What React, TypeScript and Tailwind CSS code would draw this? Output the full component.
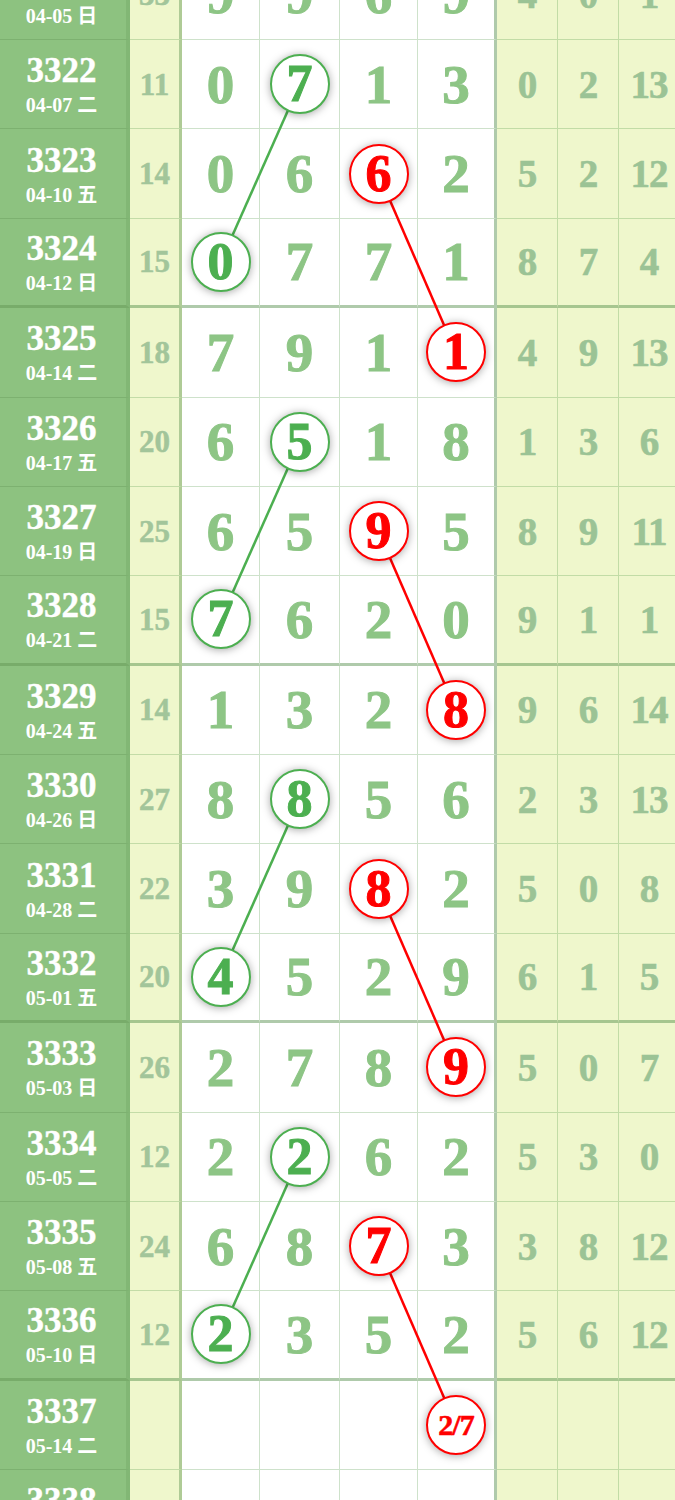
import React from 'react';

type Row = {
  no: string;
  date: string;
  sum: string;
  d: string[];
  r: string[];
  g?: number;
  red?: number;
};

const rows: Row[] = [
  { no: '3321', date: '04-05 日', sum: '33', d: ['9', '9', '6', '9'], r: ['4', '0', '1'] },
  { no: '3322', date: '04-07 二', sum: '11', d: ['0', '7', '1', '3'], g: 1, r: ['0', '2', '13'] },
  { no: '3323', date: '04-10 五', sum: '14', d: ['0', '6', '6', '2'], red: 2, r: ['5', '2', '12'] },
  { no: '3324', date: '04-12 日', sum: '15', d: ['0', '7', '7', '1'], g: 0, r: ['8', '7', '4'] },
  { no: '3325', date: '04-14 二', sum: '18', d: ['7', '9', '1', '1'], red: 3, r: ['4', '9', '13'] },
  { no: '3326', date: '04-17 五', sum: '20', d: ['6', '5', '1', '8'], g: 1, r: ['1', '3', '6'] },
  { no: '3327', date: '04-19 日', sum: '25', d: ['6', '5', '9', '5'], red: 2, r: ['8', '9', '11'] },
  { no: '3328', date: '04-21 二', sum: '15', d: ['7', '6', '2', '0'], g: 0, r: ['9', '1', '1'] },
  { no: '3329', date: '04-24 五', sum: '14', d: ['1', '3', '2', '8'], red: 3, r: ['9', '6', '14'] },
  { no: '3330', date: '04-26 日', sum: '27', d: ['8', '8', '5', '6'], g: 1, r: ['2', '3', '13'] },
  { no: '3331', date: '04-28 二', sum: '22', d: ['3', '9', '8', '2'], red: 2, r: ['5', '0', '8'] },
  { no: '3332', date: '05-01 五', sum: '20', d: ['4', '5', '2', '9'], g: 0, r: ['6', '1', '5'] },
  { no: '3333', date: '05-03 日', sum: '26', d: ['2', '7', '8', '9'], red: 3, r: ['5', '0', '7'] },
  { no: '3334', date: '05-05 二', sum: '12', d: ['2', '2', '6', '2'], g: 1, r: ['5', '3', '0'] },
  { no: '3335', date: '05-08 五', sum: '24', d: ['6', '8', '7', '3'], red: 2, r: ['3', '8', '12'] },
  { no: '3336', date: '05-10 日', sum: '12', d: ['2', '3', '5', '2'], g: 0, r: ['5', '6', '12'] },
  { no: '3337', date: '05-14 二', sum: '', d: ['', '', '', '2/7'], red: 3, r: ['', '', ''] },
  { no: '3338', date: '05-17 五', sum: '', d: ['', '', '', ''], r: ['', '', ''] },
];

const H = 89.375;
const serif = "font-['Liberation_Serif','Noto_Sans_CJK_SC',serif]";

// x centers of the four digit columns
const colX = [220.5, 299.5, 378.5, 456];
const isThick = (i: number) => i % 4 === 0 && i > 0;
const rowY = (i: number) => i * H + (H - (isThick(i + 1) ? 3 : 1)) / 2;

const links: { color: string; from: [number, number]; to: [number, number] }[] = [];
[1, 5, 9, 13].forEach((i) => links.push({ color: '#4caf50', from: [i, 1], to: [i + 2, 0] }));
[2, 6, 10, 14].forEach((i) => links.push({ color: '#ff0000', from: [i, 2], to: [i + 2, 3] }));

const Circle: React.FC<{ text: string; red?: boolean }> = ({ text, red }) => (
  <div
    className={`relative z-10 flex h-[60px] w-[60px] items-center justify-center rounded-full border-[2.5px] bg-white shadow-[0_1px_8px_rgba(0,0,0,0.35)] ${
      red ? 'border-[#ff0000] text-[#ff0000]' : 'border-[#4caf50] text-[#4caf50]'
    } ${text.length > 1 ? 'text-[30px] tracking-[-1px] [-webkit-text-stroke:0.6px_currentColor]' : 'text-[52px] [-webkit-text-stroke:1px_currentColor]'} font-bold leading-none`}
  >
    {text}
  </div>
);

export default function App() {
  return (
    <div className={`h-[1500px] w-[675px] overflow-hidden bg-white ${serif}`}>
      <div className="relative -mt-[49.375px]">
        {rows.map((row, i) => {
          const bb = isThick(i + 1) ? 'border-b-[3px] border-b-[rgba(80,140,70,0.45)]' : 'border-b border-b-[rgba(80,150,70,0.28)]';
          return (
            <div key={row.no} className="flex h-[89.375px] w-[680px]">
              <div
                className={`flex w-[130px] shrink-0 flex-col items-center justify-center border-r-[4px] border-r-[#82b775] bg-[#8dc280] pr-[3px] text-white ${
                  isThick(i + 1) ? 'border-b-[3px] border-b-[#78ac6a]' : 'border-b border-b-[#7db170]'
                }`}
              >
                <div className="text-[35px] font-bold leading-none [-webkit-text-stroke:0.4px_white]">{row.no}</div>
                <div className="mt-[7px] text-[20px] font-bold leading-none">{row.date}</div>
              </div>
              <div
                className={`flex w-[52px] shrink-0 items-center justify-center border-r-[3px] border-r-[rgba(80,140,70,0.4)] bg-[#eff7cc] text-[31px] font-bold leading-none text-[#a2c59a] [-webkit-text-stroke:0.5px_currentColor] ${bb}`}
              >
                {row.sum}
              </div>
              {row.d.map((v, c) => {
                const w = ['w-[78px]', 'w-[80px]', 'w-[78px]', 'w-[79px]'][c];
                const br = c === 3 ? 'border-r-[3px] border-r-[rgba(80,140,70,0.45)]' : 'border-r border-r-[rgba(80,150,70,0.28)]';
                const circled = row.g === c || row.red === c;
                return (
                  <div key={c} className={`flex ${w} shrink-0 items-center justify-center bg-white ${br} ${bb}`}>
                    {circled ? (
                      <Circle text={v} red={row.red === c} />
                    ) : (
                      <span className="text-[55px] font-bold leading-none text-[#8dc585] [-webkit-text-stroke:1px_currentColor]">{v}</span>
                    )}
                  </div>
                );
              })}
              {row.r.map((v, c) => (
                <div
                  key={c}
                  className={`flex w-[61px] shrink-0 items-center justify-center border-r border-r-[rgba(80,150,70,0.28)] bg-[#eff7cc] text-[39px] font-bold leading-none tracking-[-1px] text-[#9bc395] [-webkit-text-stroke:0.6px_currentColor] ${bb}`}
                >
                  {v}
                </div>
              ))}
            </div>
          );
        })}
        <svg className="pointer-events-none absolute left-0 top-0 h-[1700px] w-[680px]" viewBox="0 0 680 1700">
          {links.map((l, k) => (
            <line
              key={k}
              x1={colX[l.from[1]]}
              y1={rowY(l.from[0])}
              x2={colX[l.to[1]]}
              y2={rowY(l.to[0])}
              stroke={l.color}
              strokeWidth={2.5}
            />
          ))}
        </svg>
      </div>
    </div>
  );
}
